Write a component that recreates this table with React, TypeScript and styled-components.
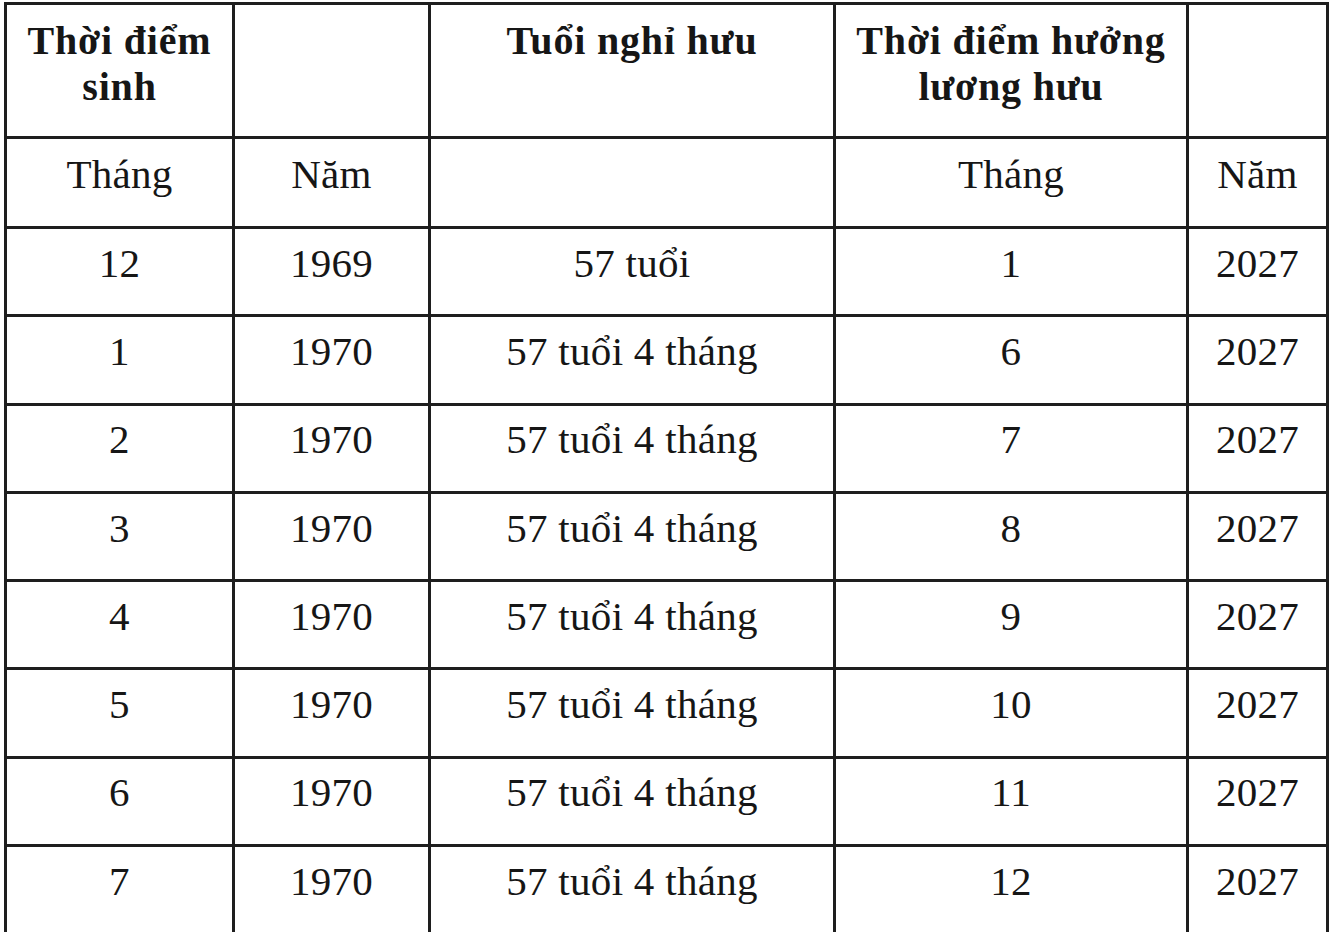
import styled, { createGlobalStyle } from 'styled-components';

/* Data */
const ROWS = [
    { birthMonth: '12', birthYear: '1969', age: '57 tuổi', month: '1', year: '2027' },
    { birthMonth: '1', birthYear: '1970', age: '57 tuổi 4 tháng', month: '6', year: '2027' },
    { birthMonth: '2', birthYear: '1970', age: '57 tuổi 4 tháng', month: '7', year: '2027' },
    { birthMonth: '3', birthYear: '1970', age: '57 tuổi 4 tháng', month: '8', year: '2027' },
    { birthMonth: '4', birthYear: '1970', age: '57 tuổi 4 tháng', month: '9', year: '2027' },
    { birthMonth: '5', birthYear: '1970', age: '57 tuổi 4 tháng', month: '10', year: '2027' },
    { birthMonth: '6', birthYear: '1970', age: '57 tuổi 4 tháng', month: '11', year: '2027' },
    { birthMonth: '7', birthYear: '1970', age: '57 tuổi 4 tháng', month: '12', year: '2027' },
];

const COL_WIDTHS = [228, 196, 405, 353, 140];

export default function App() {
    return (
        <>
            <GlobalStyle />
            <Page>
                <Table>
                    <colgroup>
                        {COL_WIDTHS.map((w, i) => <col key = { i } style = {{ width: w }} />)}
                    </colgroup>
                    <thead>
                        <HeadRow>
                            <HeadCell>Thời điểm<br />sinh</HeadCell>
                            <HeadCell />
                            <HeadCell>Tuổi nghỉ hưu</HeadCell>
                            <HeadCell>Thời điểm hưởng<br />lương hưu</HeadCell>
                            <HeadCell />
                        </HeadRow>
                        <SubRow>
                            <Cell>Tháng</Cell>
                            <Cell>Năm</Cell>
                            <Cell />
                            <Cell>Tháng</Cell>
                            <Cell>Năm</Cell>
                        </SubRow>
                    </thead>
                    <tbody>
                        {ROWS.map((r, i) => (
                            <BodyRow key = { i }>
                                <Cell>{r.birthMonth}</Cell>
                                <Cell>{r.birthYear}</Cell>
                                <Cell>{r.age}</Cell>
                                <Cell>{r.month}</Cell>
                                <Cell>{r.year}</Cell>
                            </BodyRow>
                        ))}
                    </tbody>
                </Table>
            </Page>
        </>
    );
}

/* Styles */
const GlobalStyle = createGlobalStyle`
  html, body {
    margin: 0;
    background: #fff;
    overflow: hidden;
  }
`;

const Page = styled.div`
  padding: 2px 0 0 4px;
  font-family: "Liberation Serif", "Times New Roman", serif;
  color: #161616;
`;

const Table = styled.table`
  width: 1322px;
  table-layout: fixed;
  border-collapse: collapse;
`;

const Cell = styled.td`
  border: 3px solid #1e1e1e;
  padding: 0 4px 18px;
  text-align: center;
  vertical-align: middle;
  font-size: 41px;
  line-height: 46px;
  letter-spacing: 0.3px;
`;

const HeadCell = styled.th`
  border: 3px solid #1e1e1e;
  padding: 13px 4px 0;
  text-align: center;
  vertical-align: top;
  font-size: 40px;
  font-weight: 700;
  line-height: 46px;
  letter-spacing: 0.8px;
`;

const HeadRow = styled.tr`
  height: 134px;
`;

const SubRow = styled.tr`
  height: 90px;
`;

const BodyRow = styled.tr`
  height: 88.3px;
`;
